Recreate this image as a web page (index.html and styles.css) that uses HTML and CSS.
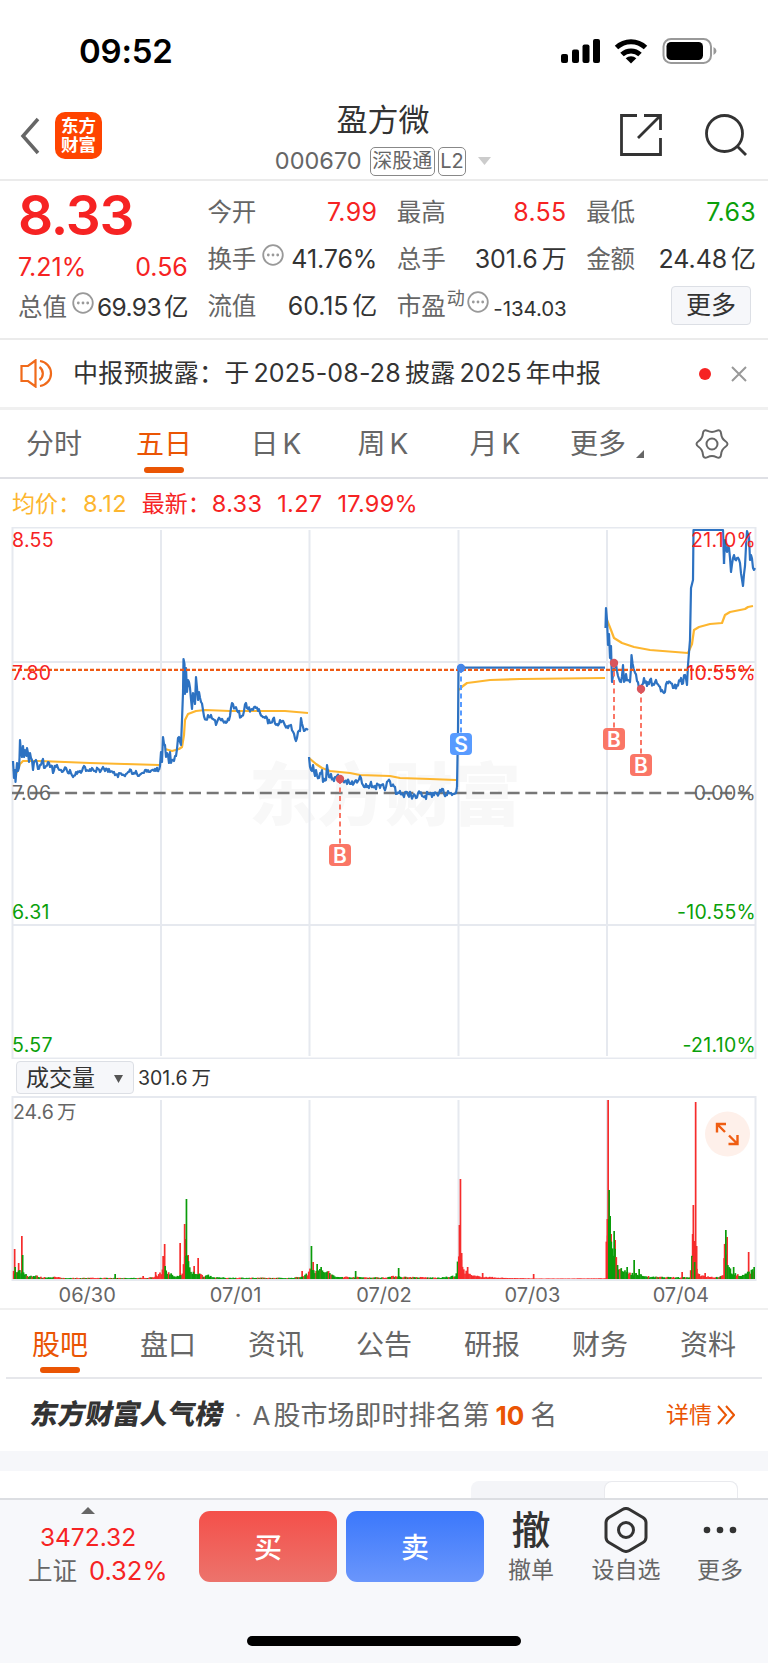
FILE: index.html
```html
<!DOCTYPE html>
<html lang="zh-CN">

<head>
    <meta charset="UTF-8">
    <meta name="viewport" content="width=device-width, initial-scale=1.0">
    <title>盈方微 000670</title>
    <link rel="stylesheet" href="styles.css">
</head>

<body>
    <div class="status-bar">
        <span class="time">09:52</span>
        <svg class="status-icons" width="160" height="30" viewBox="558 36 160 30">
            <rect x="561" y="54" width="7" height="9" rx="2" />
            <rect x="572" y="49.500" width="7" height="13.500" rx="2" />
            <rect x="582.500" y="44.500" width="7" height="18.500" rx="2" />
            <rect x="593" y="39" width="7" height="24" rx="2" />
            <g fill="none" stroke="#000" stroke-width="5">
                <path d="M616.500 47.500a21 21 0 0 1 29 0" />
                <path d="M622 54.500a13 13 0 0 1 18 0" />
            </g>
            <path d="M625.700 58.300a8 8 0 0 1 10.600 0l-5.300 5.200z" />
            <rect x="663.500" y="39" width="47.500" height="24" rx="7.500" fill="none" stroke="#999" stroke-width="2" />
            <rect x="666.500" y="42" width="36.500" height="18" rx="4.500" />
            <path d="M713.500 47q3 1.500 3 4t-3 4z" fill="#999" />
        </svg>
    </div>

    <header class="nav">
        <div class="nav-left">
            <svg width="22" height="38" viewBox="0 0 22 38"><path d="M19 2 4 19l15 17" fill="none" stroke="#666" stroke-width="3.500" /></svg>
            <div class="logo">东方<br>财富</div>
        </div>
        <div class="nav-title">
            <h1>盈方微</h1>
            <div class="code">
                <span class="code-num">000670</span>
                <span class="tag">深股通</span>
                <span class="tag tag-l2">L2</span>
                <svg width="13" height="8"><path d="M0 0h13L6.500 8z" fill="#ccc" /></svg>
            </div>
        </div>
        <div class="nav-right">
            <svg width="42" height="42" viewBox="0 0 42 42" fill="none" stroke="#333" stroke-width="2.800"><path d="M17 1.500H1.500v39h39V24M24 1.500h16.500V16M40 2 18 24" /></svg>
            <svg width="42" height="42" viewBox="0 0 42 42" fill="none" stroke="#333" stroke-width="2.800"><circle cx="19.500" cy="19.500" r="18" /><path d="m32 32 9 9" /></svg>
        </div>
    </header>

    <section class="quote">
        <div class="quote-main">
            <div class="price">8.33</div>
            <div class="cell red change"><span>7.21%</span><span>0.56</span></div>
            <div class="cell total"><span class="label">总值</span><svg class="dots" width="22" height="22"><use href="#dots" /></svg><span class="value">69.93<i>亿</i></span></div>
        </div>
        <div class="quote-col">
            <div class="cell"><span class="label">今开</span><span class="value red">7.99</span></div>
            <div class="cell"><span class="label">换手</span><svg class="dots" width="22" height="22"><use href="#dots" /></svg><span class="value">41.76%</span></div>
            <div class="cell"><span class="label">流值</span><span class="value">60.15<i>亿</i></span></div>
        </div>
        <div class="quote-col">
            <div class="cell"><span class="label">最高</span><span class="value red">8.55</span></div>
            <div class="cell"><span class="label">总手</span><span class="value">301.6<i>万</i></span></div>
            <div class="cell"><span class="label">市盈</span><sup>动</sup><svg class="dots dots-pe" width="22" height="22"><use href="#dots" /></svg><span class="value small">-134.03</span></div>
        </div>
        <div class="quote-col">
            <div class="cell"><span class="label">最低</span><span class="value green">7.63</span></div>
            <div class="cell"><span class="label">金额</span><span class="value">24.48<i>亿</i></span></div>
            <div class="cell"><button class="more">更多</button></div>
        </div>
        <svg width="0" height="0" class="defs">
            <symbol id="dots" viewBox="0 0 22 22">
                <circle cx="11" cy="11" r="9.800" fill="none" stroke="#999" stroke-width="1.800" />
                <circle cx="6.300" cy="11" r="1.400" fill="#999" /><circle cx="11" cy="11" r="1.400" fill="#999" /><circle cx="15.700" cy="11" r="1.400" fill="#999" />
            </symbol>
        </svg>
    </section>

    <div class="notice">
        <svg width="33" height="29" viewBox="0 0 33 29" fill="none" stroke="#f06a1a" stroke-width="2.200"><path d="M15.500 1.500 8 7H1.500v15H8l7.500 5.500zM19.500 8a8 8 0 0 1 0 13M20 2a12.600 12.600 0 0 1 0 25" /></svg>
        <p>中报预披露：于<b>2025-08-28</b>披露<b>2025</b>年中报</p>
        <span class="red-dot"></span>
        <svg width="16" height="16" viewBox="0 0 16 16"><path d="m1 1 14 14M15 1 1 15" stroke="#999" stroke-width="2" /></svg>
    </div>

    <nav class="tabs">
        <span>分时</span>
        <span class="active">五日</span>
        <span>日<b>K</b></span>
        <span>周<b>K</b></span>
        <span>月<b>K</b></span>
        <span class="tab-more">更多<svg width="8" height="8"><path d="M8 0v8H0z" fill="#666" /></svg></span>
        <span><svg width="36" height="32" viewBox="-18 -16 36 32" fill="none" stroke="#666" stroke-width="2"><path d="M13.500 2.750Q9.500 5.500 9.100 10.350Q8.750 15.200 4.400 13.100Q0 11 -4.400 13.100Q-8.750 15.200 -9.100 10.350Q-9.500 5.500 -13.500 2.750Q-17.500 0 -13.500 -2.750Q-9.500 -5.500 -9.100 -10.350Q-8.750 -15.200 -4.400 -13.100Q0 -11 4.400 -13.100Q8.750 -15.200 9.100 -10.350Q9.500 -5.500 13.500 -2.750Q17.500 0 13.500 2.750z" /><circle r="5.500" /></svg></span>
    </nav>

    <div class="legend">
        <span class="avg">均价：<em>8.12</em></span>
        <span class="red">最新：<em>8.33</em></span>
        <span class="red"><em>1.27</em></span>
        <span class="red"><em>17.99%</em></span>
    </div>

    <svg class="chart" width="768" height="532" viewBox="0 527 768 532">
        <text class="watermark" x="249" y="820">东方财富</text>
        <g class="grid">
            <rect x="12.500" y="527.500" width="743" height="531" />
            <path d="M161 530v526M309.500 530v526M458.500 530v526M607 530v526M13 662h742M13 925h742" />
        </g>
        <path d="M12 793H755" class="zero" />
        <g class="avg-line">
            <path d="M13 770 17 772 20 764 23 761 40 761 90 763 159 765" />
            <path d="M165 749 172 751 179 749 182 747 184 735 185 720 188 714 196 711 205 710 230 711 285 711 308 713" />
            <path d="M309 758 316 764 322 768 330 771 350 773 360 775 390 776 400 778 430 779 456 780" />
            <path d="M459 690 463 686 467 683 475 682 490 680 520 679 605 678" />
            <path d="M607 620 611 630 614 638 622 643 634 647 650 650 688 653 692 644 694 630 699 627 710 624 722 623 725 615 730 612 745 609 748 607 753 606" />
        </g>
        <g id="priceLines" class="price-line"></g>
        <path d="M12 669.800H755" class="last" />
        <g class="axis">
            <text x="12" y="547" class="up">8.55</text>
            <text x="12" y="680" class="up">7.80</text>
            <text x="12" y="800" class="flat">7.06</text>
            <text x="12" y="919" class="down">6.31</text>
            <text x="12" y="1052" class="down">5.57</text>
            <text x="756" y="547" class="up end">21.10%</text>
            <text x="756" y="680" class="up end">10.55%</text>
            <text x="756" y="800" class="flat end">0.00%</text>
            <text x="756" y="919" class="down end">-10.55%</text>
            <text x="756" y="1052" class="down end">-21.10%</text>
        </g>
        <g id="marks"></g>
    </svg>

    <div class="volume-head">
        <button>成交量<svg width="9" height="8"><path d="M0 0h9L4.500 8z" fill="#555" /></svg></button>
        <span>301.6<i>万</i></span>
    </div>

    <svg class="chart" width="768" height="185" viewBox="0 1096 768 185">
        <g class="grid">
            <rect x="12.500" y="1097" width="743" height="183" />
            <path d="M161 1100v178M309.500 1100v178M458.500 1100v178M607 1100v178" />
        </g>
        <text x="13" y="1119" class="vol-max">24.6</text>
        <text x="57" y="1119" class="vol-max">万</text>
        <g id="volume"></g>
        <circle cx="727.500" cy="1134" r="22.500" fill="#fef0ea" />
        <g fill="none" stroke="#ef5d12" stroke-width="2.400">
            <path d="M717 1132.500v-8.500h9M717.500 1124.500l7.500 7.500M737.500 1135v9h-9M737 1143.500l-8-8" />
        </g>
    </svg>

    <div class="dates">
        <span>06/30</span><span>07/01</span><span>07/02</span><span>07/03</span><span>07/04</span>
    </div>

    <nav class="tabs tabs-info">
        <span class="active">股吧</span>
        <span>盘口</span>
        <span>资讯</span>
        <span>公告</span>
        <span>研报</span>
        <span>财务</span>
        <span>资料</span>
    </nav>

    <div class="rank">
        <strong>东方财富人气榜</strong>
        <span class="point">·</span>
        <span class="rank-text">A<i>股市场即时排名第</i><b>10</b><i>名</i></span>
        <a>详情<svg width="18" height="20" viewBox="0 0 18 20" fill="none" stroke="#ea5504" stroke-width="2"><path d="m1 1 8 9-8 9M9 1l8 9-8 9" /></svg></a>
    </div>

    <div class="posts">
        <div class="switch"><span></span></div>
    </div>

    <footer class="bottom">
        <div class="index">
            <svg width="14" height="7"><path d="M7 0l7 7H0z" fill="#666" /></svg>
            <span class="red">3472.32</span>
            <span class="index-name">上证<em class="red">0.32%</em></span>
        </div>
        <button class="trade buy">买</button>
        <button class="trade sell">卖</button>
        <div class="action cancel"><span class="big">撤</span><span>撤单</span></div>
        <div class="action pick">
            <svg width="44" height="46" viewBox="-22 -23 44 46" fill="none" stroke="#333" stroke-width="3"><path d="M-3.500-20.500q3.500-2 7 0L17-12.500q3 2 3 5v15q0 3-3 5L3.500 20.500q-3.500 2-7 0L-17 12.500q-3-2-3-5v-15q0-3 3-5z" /><circle r="7.500" /></svg>
            <span>设自选</span>
        </div>
        <div class="action others">
            <svg width="34" height="8"><circle cx="4" cy="4" r="3.300" /><circle cx="17" cy="4" r="3.300" /><circle cx="30" cy="4" r="3.300" /></svg>
            <span>更多</span>
        </div>
        <div class="home"></div>
    </footer>

    <script>
        const NS = "http://www.w3.org/2000/svg";

        function add(parent, name, attrs, text) {
            const el = document.createElementNS(NS, name);
            for (const key in attrs) el.setAttribute(key, attrs[key]);
            if (text) el.textContent = text;
            parent.appendChild(el);
        }

        // fixed seed, so the chart is the same on every load
        let seed = 7;
        function random() {
            seed = (seed * 16807) % 2147483647;
            return seed / 2147483647;
        }

        // price, one list of x,y per run of trading days
        const prices = [
            [3.5, "13,761 14,778 15,770 15.5,782 17,763 18,771 19.5,758 20,740 21,752 22,757 23,746 24,757 25,750 26.5,756 27,748 29,762 30,753 32,760 33,770 34,762 36,760 38,769 40,765 43,759 44,768 48,762 50,767 52,766 53,773 55,765"],
            [2.2, "55,765 58,768 60,770 64,770 66,768 68,773 70,770 73,777 76,772 79,772 82,771 84,766 86,771 89,771 92,768 95,771 98,769 100,772 103,767 105,771 107,769 110,772 114,772 118,777 119,773 122,775 125,776 128,772 131,770 133,774 136,771 138,776 142,773 145,770 150,772 155,769 159,770"],
            [3.5, "159,770 160,766 161,752 162,762 163,737 164,744 165,745 166,757 168,755 169,763 170,752 171,763 172,760 174,761 176,756 177,749 178,738 180,742 181,745 182,720 183.5,659 184.5,664 185,694 186,668 187,692 188,680 190,688 192,709 193,693 195,704 196,677 198,700 199,692 201,702 203,710 206,720"],
            [2.8, "206,720 208,715 211,715 213,719 216,725 220,719 223,721 227,722 230,716 232,703 235,708 238,712 241,717 244,711 246,703 248,709 252,709 256,708 260,713 265,718 270,723 273,719 277,724 280,720 284,723 288,728 291,725 296,741 298,732 300,731 301,718 303,727 304,731 308,730"],
            [3.5, "309,757 311,770 313,765 315,776 316,770 319,778 322,770 323,782 326,780 327,765 329,777 331,774 334,781 337,776 340,779 345,781 350,784 354,783 358,781 361,778 363,785 366,784 370,785 375,786 380,788 386,787 388,781 392,786 395,787 397,794 400,791 404,797 407,792 411,795 416,798 420,793 424,797 428,794 432,797 437,794 440,790 443,789 446,795 448,791 452,795 456,793 457,787"],
            [0, "457,787 458,730 458.5,668"],
            [0, "459,667.6 605,667.6"],
            [3.5, "605.5,628 606,608 607,620 608,645 609,634 610,658 611,646 612,682 614,668 616,664 618,676 621,682 623,665 624,682 626,674 628,680 630,682 631.5,655 634,670 637,681 640,688 644,678 647,686 650,680 653,684 656,680 659,686 662,690 664,693 667,682 670,682 673,688 677,685 681,678 682,684 685,675 687,685 688,665"],
            [0, "688,665 690,640 691,588 693,580 693.5,530 723,530 724,564"],
            [3, "724,564 725,540 727,552 729,548 731,572 733,558 737,558 740,563 743,586 745,566 747,531 749,536 750,560 751,555 753,568 755,568"]
        ];

        const priceLines = document.querySelector("#priceLines");
        prices.forEach(function ([amp, list]) {
            const pts = list.split(" ").map((p) => p.split(",").map(Number));
            let d = "M" + pts[0];
            for (let i = 1; i < pts.length; i++) {
                const [x0, y0] = pts[i - 1];
                const [x1, y1] = pts[i];
                const steps = amp ? Math.round(x1 - x0) : 1;
                for (let s = 1; s < steps; s++) {
                    const y = y0 + (y1 - y0) * s / steps + (random() - 0.5) * amp * 2;
                    d += `L${(x0 + s).toFixed(1)} ${y.toFixed(1)}`;
                }
                d += `L${x1} ${y1}`;
            }
            add(priceLines, "path", { d });
        });

        // buy and sell marks: x, y of the trade, y of the badge
        const marks = [
            ["B", 340, 779, 855, "#fa7666"],
            ["S", 461, 668, 744, "#589bff"],
            ["B", 614, 663, 739, "#fa7666"],
            ["B", 641, 689, 765, "#fa7666"]
        ];
        const markGroup = document.querySelector("#marks");
        marks.forEach(function ([letter, x, y, by, color]) {
            add(markGroup, "path", { d: `M${x} ${y}V${by}`, stroke: color, "stroke-width": 2, "stroke-dasharray": "5 3.500" });
            add(markGroup, "circle", { cx: x, cy: y, r: 4.2, fill: letter === "B" ? "#d9555c" : "#4686e8" });
            add(markGroup, "rect", { x: x - 11, y: by - 11, width: 22, height: 22, rx: 4, fill: color });
            add(markGroup, "text", { x, y: by + 7.5, class: "mark" }, letter);
        });

        // small trades: x, height, share of green bars
        const base = [
            [13, 8, .6], [16, 6, .9], [20, 8, .9], [24, 6, .9], [28, 3, .9], [36, 3, .8], [42, 1.5, .6], [55, 2, .6], [62, 1, .5], [145, 1, .5],
            [155, 2, .3], [160, 6, .3], [165, 9, .9], [170, 5, .9], [176, 2, .8], [182, 5, .3], [185, 24, 1], [188, 16, 1], [191, 6, .9], [197, 6, .9], [203, 3, .9],
            [208, 4, .9], [214, 1.5, .7], [230, 1.2, .6], [290, 1, .6], [300, 2, .6], [308, 5, .4], [311, 13, .9], [315, 8, .8], [320, 8, .9], [328, 7, .8],
            [335, 2, .6], [345, 2, .6], [370, 1.5, .5], [385, 1.5, .5], [397, 3, .9], [402, 2, .6], [440, 1.2, .7], [456, 3, .9], [458.5, 25, 0],
            [460, 25, 0], [463, 9, 0], [467, 6, 0], [472, 3, 0], [485, 2, 0], [505, 1, 0], [540, .4, 0], [605, .6, 0], [607, 50, 0], [608, 70, 1], [610, 48, 1],
            [612, 33, .9], [616, 20, .8], [619, 9, .8], [630, 6, .8], [640, 4, .9], [650, 2, .8], [680, 1.5, .6], [690, 2, .4], [692, 24, 0], [694, 28, 0],
            [697, 8, 0], [701, 3, 0], [715, 1.5, .4], [723, 3, .4], [725, 34, .8], [728, 16, .9], [732, 6, .9], [740, 3, .9], [747, 6, .7], [755, 10, .9]
        ];
        const spikes = [
            [14.5, 30, 0], [15, 12, 1], [18.5, 16, 0], [21.7, 43, 0], [22.5, 24, 1], [115, 5, 1], [143, 3, 0], [155.5, 7, 0], [163, 23, 0], [164.5, 35, 0],
            [165, 13, 1], [180, 36, 0], [184.5, 55, 0], [185.5, 40, 0], [186.3, 80, 1], [188, 24, 0], [194, 13, 0], [198, 21, 0], [302, 8, 0], [311.3, 33, 1],
            [313, 17, 0], [317, 15, 1], [321, 12, 1], [355.5, 8, 1], [398.5, 11, 1], [459.3, 54, 0], [460.3, 100, 0], [461.5, 26, 0], [467.5, 12, 0],
            [482.5, 6, 0], [533.5, 5, 0], [607.2, 60, 0], [608, 179, 0], [609, 89, 1], [610, 63, 1], [611, 45, 0], [614, 48, 1], [615, 39, 0],
            [627, 12, 1], [634, 19, 1], [639, 10, 1], [682, 7, 0], [692.5, 45, 0], [693.2, 74, 0], [694, 38, 0], [695.5, 177, 0], [696.5, 33, 0],
            [694.5, 17, 1], [705, 6, 0], [724.5, 35, 0], [725.7, 49, 1], [727, 42, 0], [733.5, 12, 1], [748.5, 27, 0], [754, 12, 1]
        ];

        const volume = document.querySelector("#volume");
        function bar(x, h, green) {
            add(volume, "rect", { x: x - 0.7, y: 1279 - h, width: 1.7, height: h, fill: green ? "#0a9c0a" : "#f62c2c" });
        }
        spikes.filter((s) => !s[2]).forEach((s) => bar(...s));
        let k = 0;
        for (let x = 13.5; x < 755; x += 1.24) {
            while (x > base[k + 1][0]) k++;
            const [x0, h0, g] = base[k];
            const [x1, h1] = base[k + 1];
            const h = h0 + (h1 - h0) * (x - x0) / (x1 - x0);
            bar(x, h * (0.7 + random() * 0.6), random() < g);
        }
        spikes.filter((s) => s[2]).forEach((s) => bar(...s));
    </script>
</body>

</html>
```
FILE: styles.css
```css
* {
    box-sizing: border-box;
}

body {
    margin: 0;
    width: 768px;
    height: 1663px;
    overflow: hidden;
    background-color: #fff;
    color: #333;
    font-family: Inter, "Noto Sans CJK SC", sans-serif;
    font-size: 25px;
    line-height: 1;
}

svg {
    display: block;
    flex: none;
}

i,
em {
    font-style: normal;
}

button {
    font-family: inherit;
    line-height: 1;
    padding: 0;
}

.red {
    color: #f62323;
}

.green {
    color: #0aa00a;
}

.status-bar {
    height: 100px;
    padding: 2px 50px 0 79px;
    display: flex;
    justify-content: space-between;
    align-items: center;
}

.time {
    font-size: 33px;
    font-weight: 600;
    letter-spacing: -0.2px;
    color: #000;
}

.nav {
    height: 81px;
    border-bottom: 2px solid #ebebeb;
    padding: 0 21px 0 19px;
    display: grid;
    grid-template-columns: 200px 1fr 200px;
}

.nav-left {
    display: flex;
    align-items: center;
    gap: 14px;
    height: 71px;
}

.logo {
    width: 47px;
    height: 47px;
    border-radius: 10px;
    background-color: #ff4400;
    color: #fff;
    font-size: 17.500px;
    font-weight: 700;
    line-height: 19px;
    text-align: center;
    padding-top: 4px;
}

.nav-title {
    text-align: center;
}

h1 {
    margin: 3px 0 0;
    font-size: 31px;
    font-weight: 400;
    line-height: 34px;
}

.code {
    display: flex;
    align-items: center;
    justify-content: center;
    height: 30px;
    margin-top: 9px;
    font-size: 23.500px;
    color: #666;
}

.tag {
    height: 29px;
    border: 1.500px solid #888;
    border-radius: 5px;
    font-size: 20px;
    line-height: 26px;
    padding: 0 1.500px;
    margin-left: 8px;
}

.tag-l2 {
    margin: 0 12px 0 3px;
}

.nav-right {
    display: flex;
    justify-content: flex-end;
    align-items: center;
    gap: 43px;
    height: 70px;
}

.quote {
    height: 159px;
    border-bottom: 2px solid #ebebeb;
    padding: 0 12px 0 18px;
    display: grid;
    grid-template-columns: repeat(4, 1fr);
    column-gap: 19.500px;
}

.defs {
    position: absolute;
}

.quote-col {
    padding-top: 8px;
}

.cell {
    display: flex;
    align-items: center;
    height: 47px;
}

.label {
    font-size: 24.500px;
    color: #666;
    white-space: nowrap;
}

.value {
    margin-left: auto;
    white-space: nowrap;
    letter-spacing: -0.1px;
}

.value i {
    margin-left: 4px;
}

.quote-col .value.red,
.quote-col .value.green {
    letter-spacing: 0.300px;
}

.quote-main .total {
    height: 45px;
}

.total .value {
    font-size: 24.500px;
    letter-spacing: -0.600px;
}

.total .value i {
    margin-left: 3px;
}

.quote-col .small {
    font-size: 20.500px;
    padding-top: 6px;
}

.price {
    height: 68px;
    line-height: 69px;
    font-size: 55px;
    font-weight: 600;
    letter-spacing: -1.200px;
    color: #f62323;
}

.change {
    height: 36px;
    justify-content: space-between;
}

.dots {
    margin: 0 0 10px 6px;
}

.total .dots {
    margin-left: 5px;
}

.dots-pe {
    margin-left: 2px;
}

.cell sup {
    font-size: 18px;
    color: #666;
    margin: 0 0 16px 1px;
    vertical-align: baseline;
}

.more {
    width: 80px;
    height: 39px;
    margin: 0 5px 3px auto;
    border: 1.500px solid #dcdfe5;
    border-radius: 4px;
    background-color: #f6f7fa;
    font-size: 25px;
    color: #333;
}

.notice {
    height: 70px;
    border-bottom: 3px solid #f0f0f0;
    padding: 0 21px 0 20px;
    display: flex;
    align-items: center;
}

.notice p {
    margin: 0 auto 0 20px;
    white-space: nowrap;
    letter-spacing: 0.200px;
}

.notice b {
    font-weight: 400;
    margin: 0 4px;
}

.red-dot {
    width: 12px;
    height: 12px;
    border-radius: 50%;
    background-color: #f62323;
    margin-right: 20px;
}

.tabs {
    height: 69px;
    border-bottom: 2px solid #dfe0e5;
    display: grid;
    grid-template-columns: 108px 112px 112px 102px 122px 102px 108px;
    font-size: 28px;
    color: #666;
}

.tabs span {
    display: flex;
    justify-content: center;
    align-items: center;
    height: 68px;
}

.tabs b {
    font-weight: 400;
    margin-left: 4px;
}

.tabs .active {
    color: #ea5504;
    position: relative;
}

.tabs .active::after {
    content: "";
    position: absolute;
    left: calc(50% - 20px);
    bottom: 5px;
    width: 40px;
    height: 6px;
    border-radius: 3px;
    background-color: #ea5504;
}

.tab-more svg {
    margin: 20px 0 0 10px;
}

.legend {
    height: 48px;
    padding: 1px 0 0 12px;
    display: flex;
    align-items: center;
    gap: 15px;
    font-size: 23px;
}

.legend em {
    font-size: 23.500px;
    letter-spacing: 0.300px;
}

.legend .avg em {
    margin-left: 2px;
}

.legend .avg + .red em {
    margin-left: 1px;
}

.avg {
    color: #fdb62f;
}

.chart {
    font-size: 19.500px;
}

.axis {
    letter-spacing: 0.300px;
}

.grid {
    fill: none;
    stroke: #e6e9ef;
    stroke-width: 2;
}

.watermark {
    font-size: 68px;
    font-weight: 900;
    fill: #f8f8f8;
}

.zero {
    stroke: #777;
    stroke-width: 2.600;
    stroke-dasharray: 12 5.700;
}

.last {
    stroke: #ee5a14;
    stroke-width: 2.200;
    stroke-dasharray: 4 2;
}

.avg-line,
.price-line {
    fill: none;
    stroke: #fdb62f;
    stroke-width: 2.200;
    stroke-linejoin: round;
}

.price-line {
    stroke: #2d72c2;
}

.up {
    fill: #f62323;
}

.down {
    fill: #0aa00a;
}

.flat {
    fill: #666;
}

.end {
    text-anchor: end;
}

.mark {
    fill: #fff;
    font-size: 21px;
    font-weight: 600;
    text-anchor: middle;
}

.volume-head {
    height: 37px;
    padding: 0 0 0 16px;
    display: flex;
    align-items: center;
    gap: 4px;
    font-size: 19.500px;
}

.volume-head span {
    padding-top: 3px;
}

.volume-head button {
    width: 118px;
    height: 33px;
    border: 1.500px solid #dcdfe5;
    border-radius: 4px;
    background-color: #f6f7fa;
    display: flex;
    align-items: center;
    justify-content: space-between;
    padding: 2px 10px 0 9px;
    font-size: 23px;
    color: #333;
}

.volume-head i {
    margin-left: 4px;
}

.vol-max {
    fill: #666;
}

.dates {
    height: 29px;
    border-bottom: 2px solid #f0f0f0;
    padding: 0 13px;
    display: grid;
    grid-template-columns: repeat(5, 1fr);
    text-align: center;
    line-height: 29px;
    font-size: 20px;
    color: #666;
}

.tabs-info {
    margin: 0 6px;
    border-color: #e6e7eb;
    grid-template-columns: repeat(7, 1fr);
}

.tabs-info span {
    padding-top: 1px;
}

.rank {
    height: 72px;
    padding: 0 33px 0 31px;
    display: flex;
    align-items: center;
    white-space: nowrap;
}

.rank strong {
    font-size: 27.500px;
    font-weight: 900;
    transform: skewX(-10deg);
}

.point {
    width: 29px;
    text-align: center;
    color: #666;
}

.rank-text {
    color: #666;
    font-size: 26px;
}

.rank-text i {
    font-size: 27px;
    margin-left: 3px;
}

.rank-text b {
    color: #ea5504;
    font-weight: 700;
    margin: 0 3px 0 6px;
}

.rank a {
    margin-left: auto;
    display: flex;
    align-items: center;
    gap: 5px;
    font-size: 23px;
    color: #ea5504;
}

.posts {
    height: 47px;
    border-top: 20px solid #f6f7fa;
    padding: 10px 30px 0 471px;
}

.switch {
    height: 17px;
    border-radius: 8px 8px 0 0;
    background-color: #f4f5f8;
    display: flex;
    justify-content: flex-end;
}

.switch span {
    width: 134px;
    border: 1.500px solid #e9eaee;
    border-bottom: none;
    border-radius: 8px 8px 0 0;
    background-color: #fff;
}

.bottom {
    height: 166px;
    border-top: 2px solid #dcdee2;
    background-color: #f7f8fb;
    padding: 11px 0 0 28px;
    display: grid;
    grid-template-columns: 171px 138px 138px 69px 106px 80px;
    grid-template-rows: 72px 1fr;
}

.index {
    width: 138px;
    margin: -4px 0 0 -9px;
    display: flex;
    flex-direction: column;
    align-items: center;
    font-size: 24.500px;
}

.index > span {
    height: 34px;
    line-height: 34px;
}

.index svg + span {
    margin-top: 6px;
}

.index-name {
    display: flex;
    gap: 12px;
    color: #666;
    white-space: nowrap;
    align-self: flex-start;
    margin-left: 9px;
}

.index-name em {
    font-size: 25.500px;
}

.trade {
    height: 71px;
    width: 138px;
    border: none;
    border-radius: 11px;
    font-size: 28px;
    font-weight: 500;
    padding-top: 2px;
    color: #fff;
}

.buy {
    background: linear-gradient(#f4504a, #ec736c);
}

.sell {
    margin-left: 9px;
    background: linear-gradient(#3b78fb, #6a96fc);
}

.action {
    display: flex;
    flex-direction: column;
    align-items: center;
    justify-content: space-between;
    height: 72px;
    font-size: 23px;
    color: #666;
    white-space: nowrap;
}

.cancel {
    margin: -1px 0 0 12px;
    height: 72px;
    width: 88px;
}

.big {
    font-size: 39px;
    font-weight: 500;
    color: #333;
}

.pick {
    margin: -4px 0 0 30px;
    height: 75px;
    width: 104px;
}

.others {
    margin: 15px 0 0 17px;
    height: 56px;
    width: 106px;
}

.others svg {
    fill: #333;
}

.home {
    grid-column: 1 / -1;
    width: 274px;
    height: 10px;
    border-radius: 5px;
    background-color: #000;
    margin: 53px 0 0 219px;
}
```
